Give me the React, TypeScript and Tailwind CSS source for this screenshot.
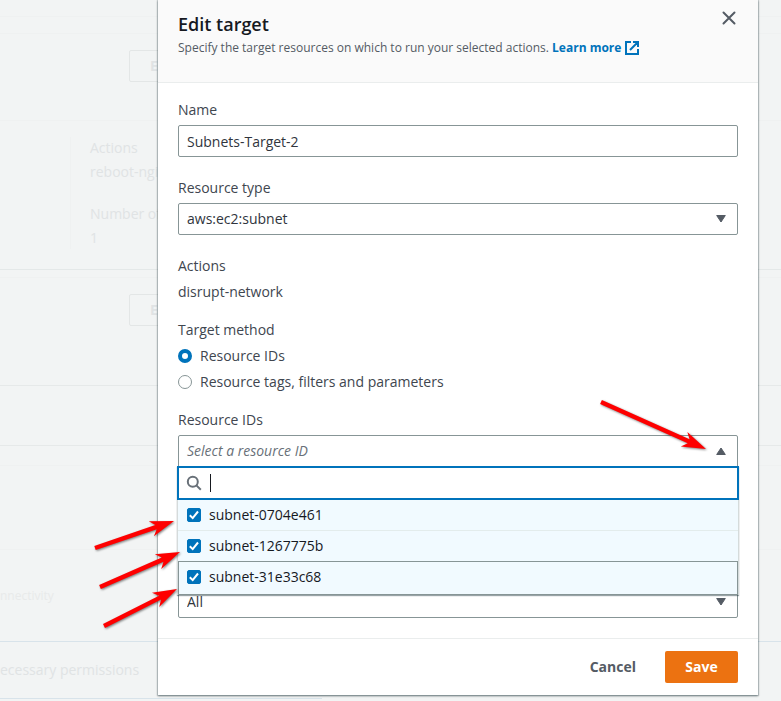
import type { ReactNode } from "react";

const CONTROL =
  "block h-8 w-full appearance-none rounded-[2px] border border-[#879596] bg-white px-2 text-left text-[14px] leading-[22px] text-[#30353d] outline-none";

function Triangle({ up = false }: { up?: boolean }) {
  return (
    <svg
      className="pointer-events-none absolute right-[12px] top-1/2 -mt-1 h-2 w-[10px]"
      viewBox="0 0 10 8"
      fill="#545b64"
      stroke="#545b64"
      strokeLinejoin="round"
      aria-hidden="true"
    >
      <path d={up ? "M5 1 9.3 7.5H.7Z" : "M5 7 .7.5h8.6Z"} />
    </svg>
  );
}

function Field({ label, id, children }: { label: string; id: string; children: ReactNode }) {
  return (
    <div className="flex flex-col gap-1">
      <label htmlFor={id}>{label}</label>
      {children}
    </div>
  );
}

function Radio({ label, checked }: { label: string; checked?: boolean }) {
  return (
    <label className="flex items-center gap-2">
      <input
        type="radio"
        name="method"
        defaultChecked={checked}
        className="h-[14px] w-[14px] shrink-0 appearance-none rounded-full border border-[#879596] bg-white checked:border-4 checked:border-[#0073bb]"
      />
      {label}
    </label>
  );
}

function SubnetOption({ id, active }: { id: string; active?: boolean }) {
  return (
    <label
      className={
        active
          ? "-mt-px flex h-[34px] items-center gap-2 border border-[#879596] px-2 pb-[2px]"
          : "flex h-[31px] items-center gap-2 border-b border-[#e3ecec] px-[9px]"
      }
    >
      <span className="relative block h-[14px] w-[14px] shrink-0">
        <input
          type="checkbox"
          defaultChecked
          className="block h-[14px] w-[14px] appearance-none rounded-[2px] border border-[#879596] checked:border-[#0073bb] checked:bg-[#0073bb]"
        />
        <svg
          className="pointer-events-none absolute inset-0"
          viewBox="0 0 14 14"
          fill="none"
          stroke="#fff"
          strokeWidth="2"
          aria-hidden="true"
        >
          <path d="m2.8 7.2 2.9 2.9 5.3-6.6" />
        </svg>
      </span>
      {id}
    </label>
  );
}

function Arrow({ from, to }: { from: [number, number]; to: [number, number] }) {
  const length = Math.hypot(to[0] - from[0], to[1] - from[1]);
  const angle = (Math.atan2(to[1] - from[1], to[0] - from[0]) * 180) / Math.PI;
  const neck = length - 19;
  const barb = length - 24;
  return (
    <path
      transform={`translate(${from[0]} ${from[1]}) rotate(${angle})`}
      d={`M0 -2.2H${neck}L${barb} -8L${length} 0L${barb} 8L${neck} 2.2H0Z`}
    />
  );
}

function BackgroundPage() {
  return (
    <div
      className="flex min-h-screen flex-col bg-[#f2f4f4] text-[14px] leading-[22px] text-[#e0e3e4]"
      aria-hidden="true"
    >
      <div className="h-[17px] border-b border-[#eff1f1]" />
      <div className="h-[17px] border-b border-[#eff1f1]" />
      <div className="h-[87px] border-b border-[#eff1f1] pl-[129px] pt-4">
        <div className="h-8 w-20 rounded-[2px] border border-[#e3e6e6] pl-5 pt-1 font-bold">Edit</div>
      </div>
      <div className="h-[149px] border-b border-[#e4e8e8] pl-[70px] pt-4">
        <div className="h-28 border-l border-[#eff1f1] pl-[19px]">
          <div>Actions</div>
          <div className="mt-[2px]">reboot-nginx</div>
          <div className="mt-5">Number of targets</div>
          <div className="mt-[2px]">1</div>
        </div>
      </div>
      <div className="h-2 border-b border-[#eff1f1]" />
      <div className="h-[108px] border-b border-[#e6e9e9] pl-[129px] pt-4">
        <div className="h-8 w-20 rounded-[2px] border border-[#e3e6e6] pl-5 pt-1 font-bold">Edit</div>
      </div>
      <div className="h-[60px] border-b border-[#e6e9e9]" />
      <div className="h-5 border-b border-[#eff1f1]" />
      <div className="h-[84px] border-b border-[#eff1f1]" />
      <div className="h-[92px] border-b border-[#d8e3ea] pt-[35px] text-[12px] text-[#e8eaea]">nnectivity</div>
      <div className="h-[57px] w-[322px] border-b border-[#d8e3ea] pt-[17px]">ecessary permissions</div>
    </div>
  );
}

export default function App() {
  return (
    <div className="relative min-h-screen overflow-hidden font-['Open_Sans','Noto_Sans',sans-serif] text-[14px] leading-[22px] text-[#40464f]">
      <BackgroundPage />

      <div className="absolute inset-0 flex items-start justify-end pl-4 pr-[23px]">
        <section
          role="dialog"
          aria-labelledby="title"
          className="w-full max-w-[600px] bg-white shadow-[0_1px_2px_0_rgba(0,28,36,0.5),0_0_1px_1px_rgba(0,28,36,0.15)]"
        >
          <header className="flex h-[83px] items-start justify-between border-b border-[#eaeded] bg-[#fafafa] pl-5 pr-5">
            <div className="pt-[13px]">
              <h2 id="title" className="text-[18px] font-semibold leading-[22px] text-[#16191f]">
                Edit target
              </h2>
              <p className="mt-[2px] text-[12px] leading-[22px] text-[#545b64]">
                Specify the target resources on which to run your selected actions.{" "}
                <a href="#learn" className="inline-flex items-center gap-1 font-bold text-[#0073bb]">
                  Learn more
                  <svg
                    className="h-[14px] w-[14px]"
                    viewBox="0 0 14 14"
                    fill="none"
                    stroke="currentColor"
                    strokeWidth="2"
                    aria-hidden="true"
                  >
                    <path d="M6 1H1v12h12V8M8 1h5v5M13 1 5 9" />
                  </svg>
                </a>
              </p>
            </div>
            <button type="button" aria-label="Close" className="mt-[10px] flex h-4 w-[18px] items-center justify-center">
              <svg
                width="16"
                height="16"
                viewBox="0 0 16 16"
                stroke="#545b64"
                strokeWidth="2"
                strokeLinecap="round"
                aria-hidden="true"
              >
                <path d="m2.5 2.5 11 11m0-11-11 11" />
              </svg>
            </button>
          </header>

          <form className="px-5 pb-5 pt-4">
            <div className="flex flex-col gap-5">
              <Field label="Name" id="name">
                <input id="name" type="text" defaultValue="Subnets-Target-2" className={CONTROL} />
              </Field>
              <Field label="Resource type" id="type">
                <div className="relative">
                  <select id="type" className={CONTROL}>
                    <option>aws:ec2:subnet</option>
                  </select>
                  <Triangle />
                </div>
              </Field>
              <div className="flex flex-col gap-1">
                <div>Actions</div>
                <div>disrupt-network</div>
              </div>
            </div>

            <fieldset className="mt-4">
              <legend>Target method</legend>
              <div className="mt-1 flex flex-col gap-1">
                <Radio label="Resource IDs" checked />
                <Radio label="Resource tags, filters and parameters" />
              </div>
            </fieldset>

            <div className="mt-4">
              <Field label="Resource IDs" id="ids">
                <div className="relative">
                  <button
                    id="ids"
                    type="button"
                    aria-expanded="true"
                    className="block h-8 w-full rounded-t-[2px] border border-[#879596] bg-white px-2 text-left italic text-[#687078]"
                  >
                    Select a resource ID
                  </button>
                  <Triangle up />
                  <div className="absolute -left-px -right-px top-[31px] z-10 bg-[#f1faff] text-[#16191f] shadow-[0_1px_1px_0_rgba(0,28,36,0.4)]">
                    <div className="flex h-[34px] items-center border-2 border-[#0073bb] bg-white px-[7px]">
                      <svg
                        className="h-4 w-4"
                        viewBox="0 0 16 16"
                        fill="none"
                        stroke="#687078"
                        strokeWidth="2"
                        aria-hidden="true"
                      >
                        <circle cx="6.8" cy="6.8" r="5" />
                        <path d="m10.4 10.4 4.4 4.4" />
                      </svg>
                      <span className="ml-2 h-[18px] w-px bg-[#16191f]" />
                      <input type="search" aria-label="Search resource IDs" className="min-w-0 flex-1 outline-none" />
                    </div>
                    <div className="border-x border-[#d5dbdb] bg-[#f1faff]">
                      <SubnetOption id="subnet-0704e461" />
                      <SubnetOption id="subnet-1267775b" />
                      <SubnetOption id="subnet-31e33c68" active />
                    </div>
                  </div>
                </div>
              </Field>
            </div>

            <div className="relative mt-[119px]">
              <select aria-label="Selection mode" className={CONTROL}>
                <option>All</option>
              </select>
              <Triangle />
            </div>
          </form>

          <footer className="flex items-center justify-end gap-2 border-t border-[#eaeded] px-5 py-3 font-bold">
            <button type="button" className="h-8 px-[21px] text-[#545b64]">
              Cancel
            </button>
            <button type="button" className="h-8 w-[73px] rounded-[2px] bg-[#ec7211] text-white">
              Save
            </button>
          </footer>
        </section>
      </div>

      <svg
        className="pointer-events-none absolute left-0 top-0 z-20 drop-shadow-[1px_1px_1px_rgba(0,0,0,0.5)]"
        width="781"
        height="701"
        viewBox="0 0 781 701"
        fill="#fe0000"
        aria-hidden="true"
      >
        <Arrow from={[601, 402]} to={[706, 449]} />
        <Arrow from={[95, 548]} to={[174, 521]} />
        <Arrow from={[100, 587]} to={[180, 552]} />
        <Arrow from={[104, 626]} to={[177, 589]} />
      </svg>
    </div>
  );
}
